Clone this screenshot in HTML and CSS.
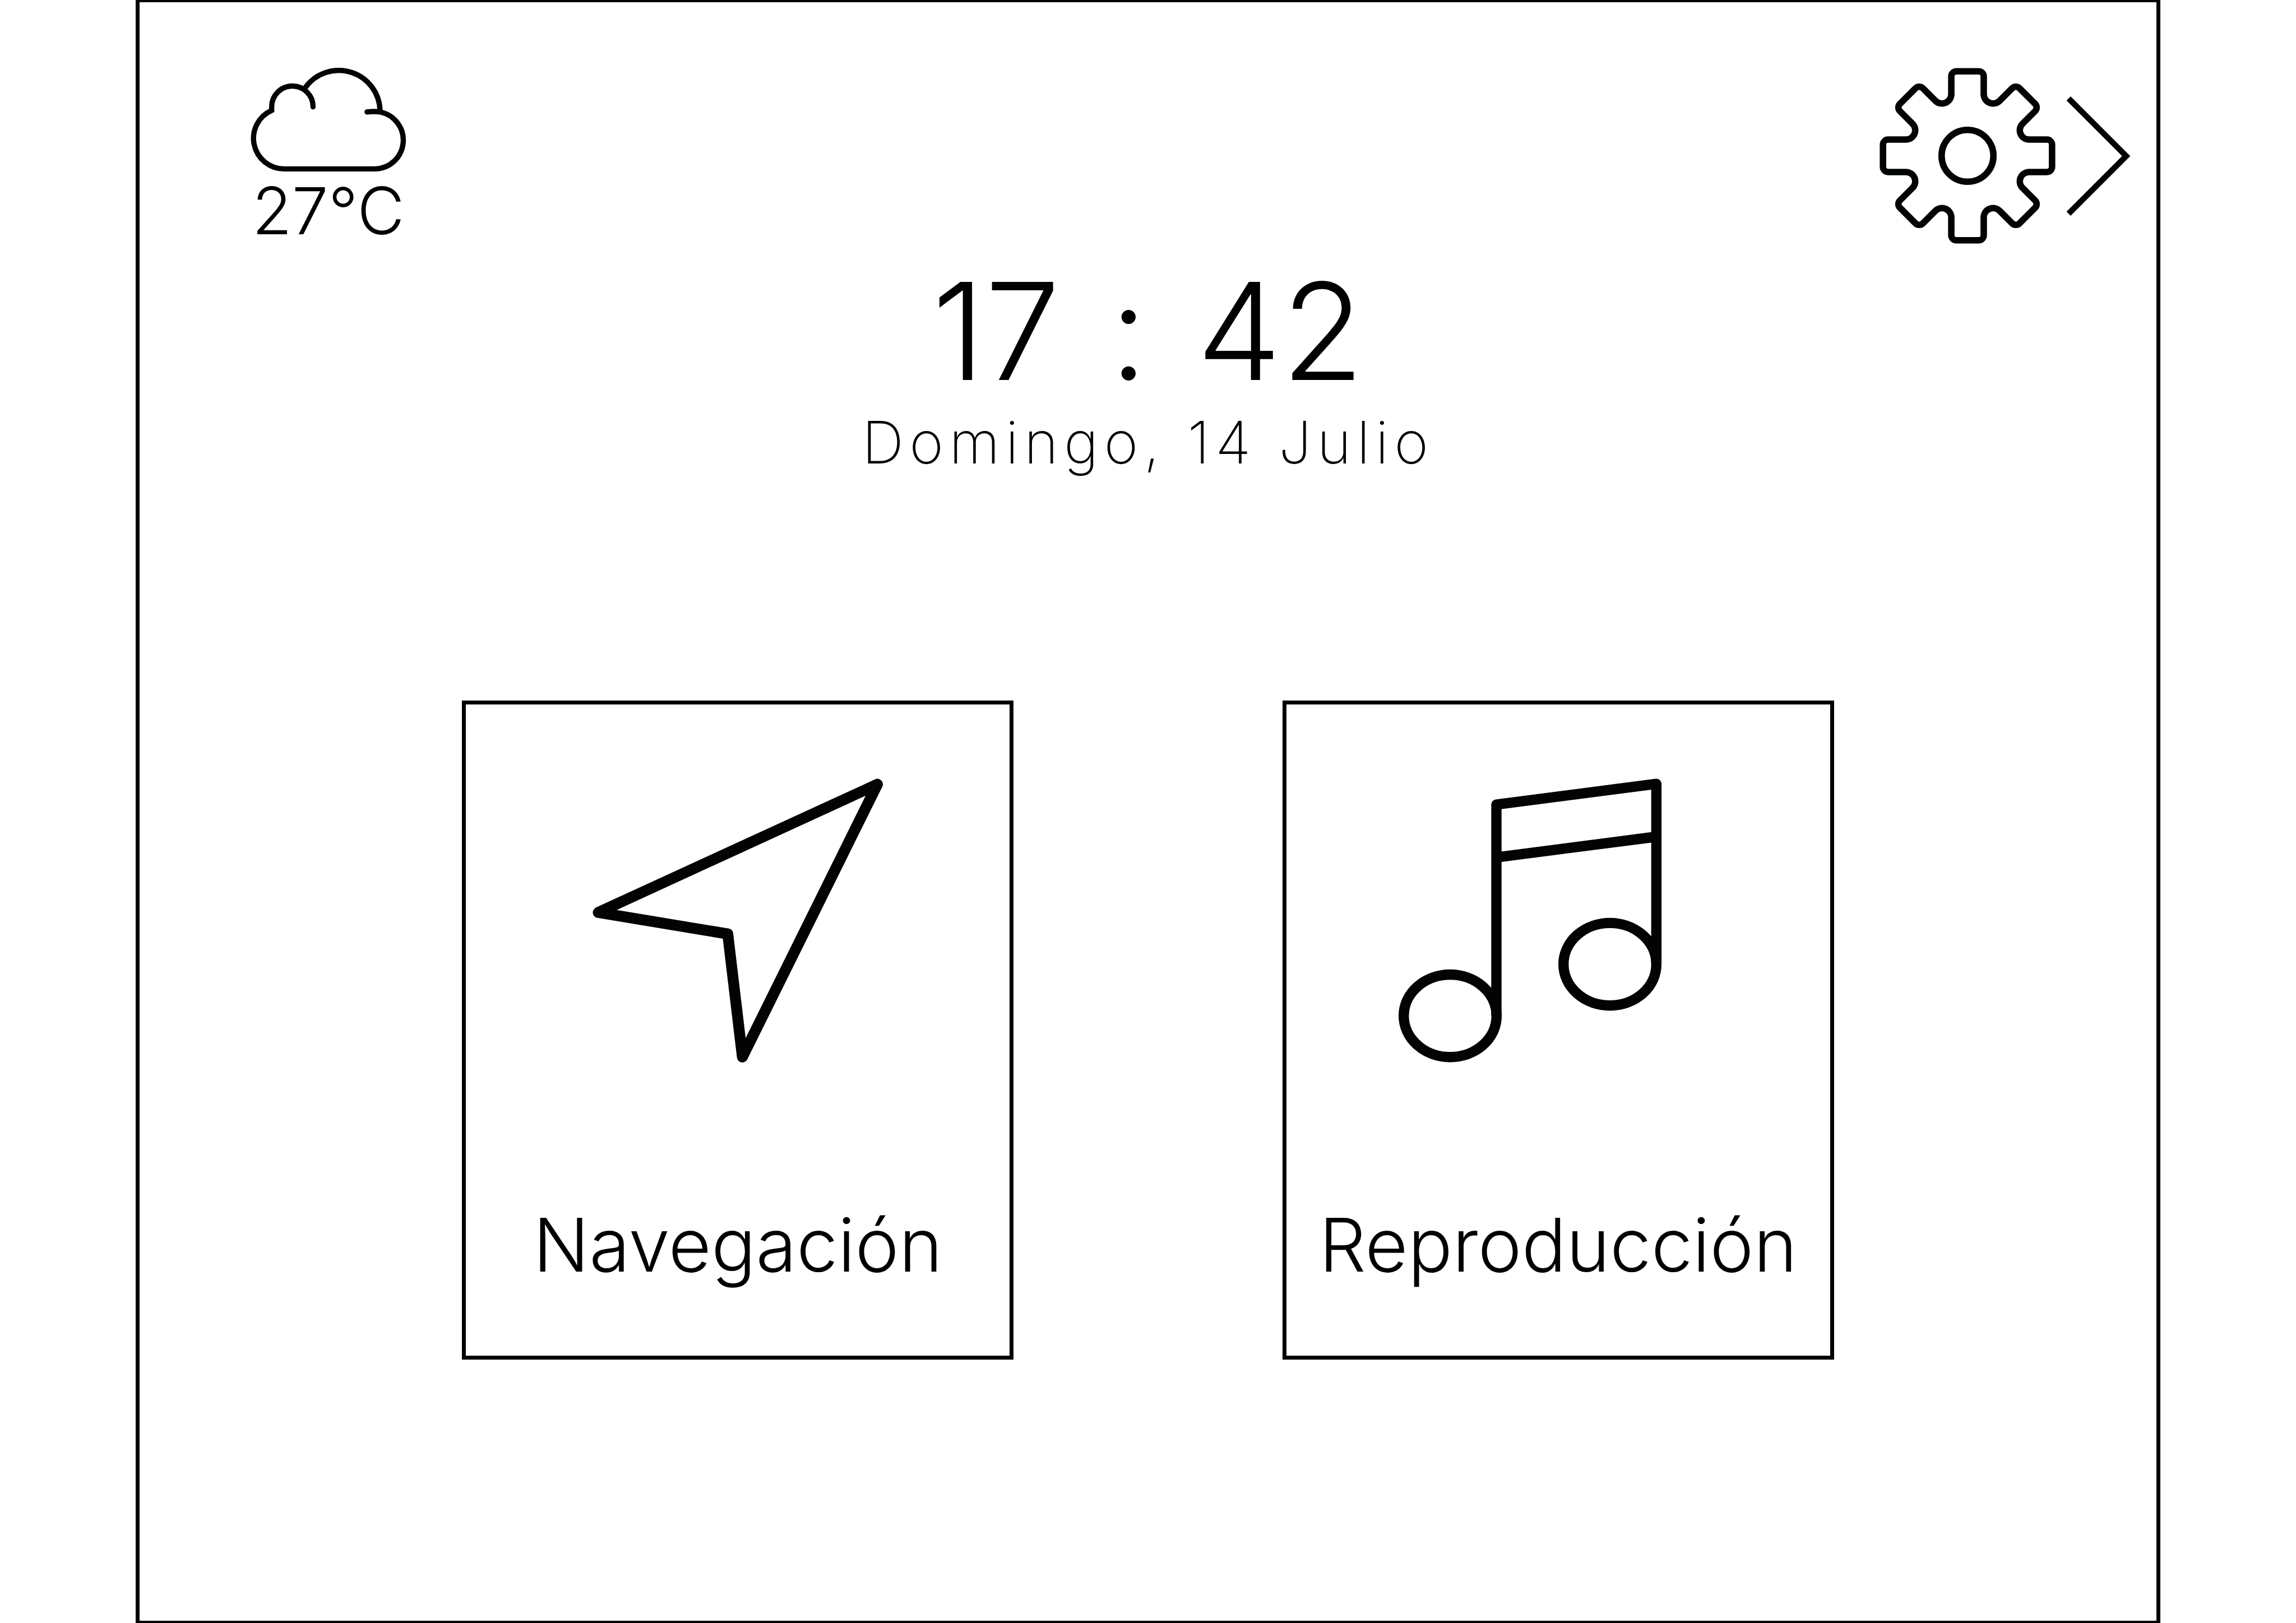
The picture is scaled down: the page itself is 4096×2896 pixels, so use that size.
FILE: index.html
```html
<!DOCTYPE html>
<html lang="es">
<head>
<meta charset="utf-8">
<meta name="viewport" content="width=device-width, initial-scale=1">
<title>Inicio</title>
<link rel="stylesheet" href="styles.css">
</head>
<body>
<div class="screen">
  <header class="topbar">
    <div class="weather">
      <svg class="weather-icon" viewBox="124 75 1008 672" aria-hidden="true">
        <path d="M878 361C905 358 945 358 965 362A186 186 0 0 1 930 730H340A198 198 0 0 1 260 351V326A134 134 0 0 1 528 328" stroke-linecap="round"/>
        <path d="M478 203A267 267 0 0 1 962 355"/>
      </svg>
      <span class="temperature">27°C</span>
    </div>
    <button class="settings" type="button" aria-label="Ajustes">
      <svg class="gear" viewBox="-190 -190 380 380" aria-hidden="true">
        <path d="M-35-133V-171.500A11 11 0 0 1-24-182.500H24A11 11 0 0 1 35-171.500V-133
          A20.100 20.100 0 0 0 69.300-118.800L96.500-146A11 11 0 0 1 112.100-146L146-112.100A11 11 0 0 1 146-96.500L118.800-69.300
          A20.100 20.100 0 0 0 133-35H171.500A11 11 0 0 1 182.500-24V24A11 11 0 0 1 171.500 35H133
          A20.100 20.100 0 0 0 118.800 69.300L146 96.500A11 11 0 0 1 146 112.100L112.100 146A11 11 0 0 1 96.500 146L69.300 118.800
          A20.100 20.100 0 0 0 35 133V171.500A11 11 0 0 1 24 182.500H-24A11 11 0 0 1-35 171.500V133
          A20.100 20.100 0 0 0-69.300 118.800L-96.500 146A11 11 0 0 1-112.100 146L-146 112.100A11 11 0 0 1-146 96.500L-118.800 69.300
          A20.100 20.100 0 0 0-133 35H-171.500A11 11 0 0 1-182.500 24V-24A11 11 0 0 1-171.500-35H-133
          A20.100 20.100 0 0 0-118.800-69.300L-146-96.500A11 11 0 0 1-146-112.100L-112.100-146A11 11 0 0 1-96.500-146L-69.300-118.800
          A20.100 20.100 0 0 0-35-133Z"/>
        <circle r="56"/>
      </svg>
      <svg class="chevron" viewBox="215 -129 138 258" aria-hidden="true">
        <path d="M219-124.500L343.500 0L219 124.500"/>
      </svg>
    </button>
  </header>

  <main class="home">
    <section class="clock">
      <time class="time" datetime="17:42"><span>17</span><span>:</span><span>42</span></time>
      <p class="date">Domingo, 14 Julio</p>
    </section>

    <nav class="cards">
      <button class="card" type="button">
        <svg class="arrow-icon" viewBox="92 96 1409 1376" aria-hidden="true">
          <path d="M1472 124L120 745L747 849L818 1445Z"/>
        </svg>
        <span class="card-label">Navegación</span>
      </button>
      <button class="card" type="button">
        <svg class="music-icon" viewBox="92 96 1548 1376" aria-hidden="true">
          <path d="M566 1246V222L1341 122V996M566 478L1341 378"/>
          <ellipse cx="342" cy="1246" rx="225" ry="200"/>
          <ellipse cx="1116" cy="996" rx="225" ry="200"/>
        </svg>
        <span class="card-label">Reproducción</span>
      </button>
    </nav>
  </main>
</div>
</body>
</html>
```
FILE: styles.css
```css
* {
  box-sizing: border-box;
}

body {
  margin: 0;
  background: #fff;
  color: #000;
  font-family: Inter, "Liberation Sans", sans-serif;
  font-weight: 300;
}

button {
  padding: 0;
  border: 0;
  background: none;
  color: inherit;
  font: inherit;
  cursor: pointer;
}

svg {
  display: block;
  fill: none;
  stroke: #020305;
}

.screen {
  display: flex;
  flex-direction: column;
  width: 88.2%;
  min-height: 100vh;
  margin: 0 auto;
  border: 7px solid #000;
  border-top-width: 4px;
  border-bottom-width: 4px;
}

.topbar {
  display: flex;
  justify-content: space-between;
  align-items: flex-start;
  padding: 117px 46px 0 198px;
}

.weather {
  display: flex;
  flex-direction: column;
  align-items: center;
  gap: 12px;
}

.weather-icon {
  width: 278px;
  height: 185px;
  stroke-width: 34;
}

.temperature {
  font-size: 116px;
  line-height: 116px;
}

.settings {
  display: flex;
  align-items: center;
  gap: 20px;
}

.gear {
  width: 314px;
  height: 314px;
  stroke-width: 14;
}

.chevron {
  width: 114px;
  height: 213px;
  stroke: #000;
  stroke-width: 12.5;
}

.clock {
  display: flex;
  flex-direction: column;
  align-items: center;
  padding-top: 36px;
}

.time {
  display: flex;
  gap: 88px;
  font-size: 240px;
  line-height: 240px;
}

.date {
  margin: 26px 0 0;
  font-size: 104px;
  font-weight: 200;
  line-height: 104px;
  letter-spacing: 10px;
}

.cards {
  display: grid;
  grid-template-columns: 1fr 1fr;
  gap: 480px;
  padding: 409px 16% 0;
}

.card {
  display: flex;
  flex-direction: column;
  align-items: center;
  gap: 259px;
  padding: 132px 0;
  border: 7px solid #000;
}

.arrow-icon {
  width: 519px;
  height: 507px;
  stroke-width: 53;
  stroke-linejoin: round;
}

.music-icon {
  width: 570px;
  height: 507px;
  stroke-width: 50;
  stroke-linejoin: round;
}

.card-label {
  font-size: 132px;
  line-height: 132px;
}
```
